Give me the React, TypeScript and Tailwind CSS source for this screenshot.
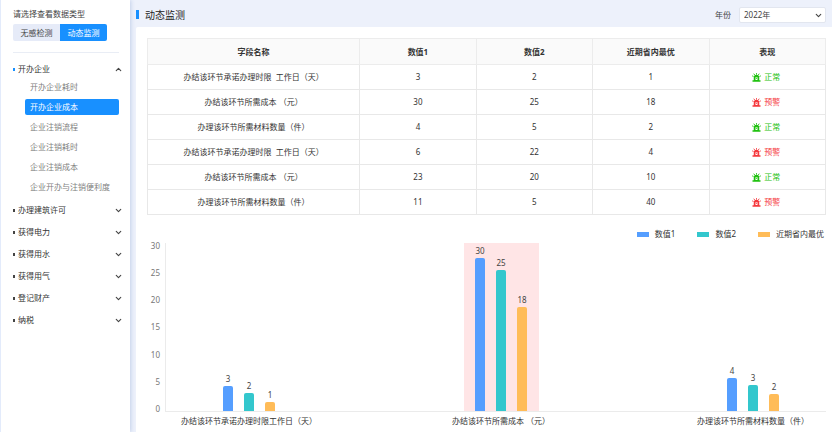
import { ChevronDown, ChevronUp } from "lucide-react";
import clsx from "clsx";

const subItems = [
  "开办企业耗时",
  "开办企业成本",
  "企业注销流程",
  "企业注销耗时",
  "企业注销成本",
  "企业开办与注销便利度",
];

const closedGroups = ["办理建筑许可", "获得电力", "获得用水", "获得用气", "登记财产", "纳税"];

const rows = [
  { name: "办结该环节承诺办理时限  工作日（天）", values: [3, 2, 1], ok: true },
  { name: "办结该环节所需成本 （元）", values: [30, 25, 18], ok: false },
  { name: "办理该环节所需材料数量（件）", values: [4, 5, 2], ok: true },
  { name: "办结该环节承诺办理时限  工作日（天）", values: [6, 22, 4], ok: false },
  { name: "办结该环节所需成本 （元）", values: [23, 20, 10], ok: true },
  { name: "办理该环节所需材料数量（件）", values: [11, 5, 40], ok: false },
];

const series = [
  { name: "数值1", color: "bg-[#559eff]" },
  { name: "数值2", color: "bg-[#33c7cd]" },
  { name: "近期省内最优", color: "bg-[#ffbc58]" },
];

// height is the bar's share of the plot, in percent
const chart = [
  {
    label: "办结该环节承诺办理时限工作日（天）",
    active: false,
    bars: [
      { value: 3, height: 15 },
      { value: 2, height: 11 },
      { value: 1, height: 5.5 },
    ],
  },
  {
    label: "办结该环节所需成本 （元）",
    active: true,
    bars: [
      { value: 30, height: 91 },
      { value: 25, height: 84 },
      { value: 18, height: 62 },
    ],
  },
  {
    label: "办理该环节所需材料数量（件）",
    active: false,
    bars: [
      { value: 4, height: 19.5 },
      { value: 3, height: 15.5 },
      { value: 2, height: 10 },
    ],
  },
];

const ticks = [30, 25, 20, 15, 10, 5, 0];

function SirenIcon() {
  return (
    <svg viewBox="0 0 18 18" className="h-[9px] w-[9px] shrink-0" aria-hidden>
      <path
        fill="currentColor"
        fillRule="evenodd"
        d="M3.5 14.5V9a5.5 5.5 0 0 1 11 0v5.5H17v3H1v-3h2.5Zm3.5-6v5.5h4V8.5H7Z"
      />
      <path fill="currentColor" d="M8.5 9.5H10V12H8.5z" />
      <path
        stroke="currentColor"
        strokeWidth="1.8"
        strokeLinecap="round"
        d="M9 1v1.5M4 2l1 1.4M14 2l-1 1.4M1 6l1.4.6M17 6l-1.4.6"
      />
    </svg>
  );
}

function Sidebar() {
  return (
    <aside className="z-10 w-[130px] shrink-0 border-l border-[#e3ebfb] bg-white pt-2 pr-[11px] pl-3 shadow-[1px_0_4px_#c3d0ea]">
      <p className="leading-3 text-[#444]">请选择查看数据类型</p>
      <div className="mt-1 flex w-[94px] overflow-hidden rounded-xs">
        <button type="button" className="h-[17px] flex-1 bg-[#e6ebf8] text-[#444]">
          无感检测
        </button>
        <button type="button" className="h-[17px] flex-1 bg-[#1890ff] text-white">
          动态监测
        </button>
      </div>
      <hr className="mt-[11px] border-[#e9edf5]" />

      <nav className="mt-2">
        <button type="button" className="flex h-4 w-full items-center text-left text-[#333]">
          <span className="mr-[3px] h-[3px] w-[2px] bg-[#1890ff]" />
          开办企业
          <ChevronUp strokeWidth={3} className="-mr-1 ml-auto h-[9px] w-[9px] text-[#444]" />
        </button>
        <ul className="mt-[2px] flex flex-col gap-1 pl-3">
          {subItems.map((item, i) => (
            <li key={item}>
              <a
                href="#"
                className={clsx(
                  "block h-4 rounded-xs pl-[5px] leading-4 whitespace-nowrap",
                  i === 1 ? "bg-[#1890ff] text-white" : "text-[#808080]",
                )}
              >
                {item}
              </a>
            </li>
          ))}
        </ul>
        <div className="mt-[7px] flex flex-col gap-[6px]">
          {closedGroups.map((group) => (
            <button
              key={group}
              type="button"
              className="flex h-4 w-full items-center text-left text-[#333]"
            >
              <span className="mr-[3px] h-[3px] w-[2px] bg-[#444]" />
              {group}
              <ChevronDown strokeWidth={3} className="-mr-1 ml-auto h-[9px] w-[9px] text-[#444]" />
            </button>
          ))}
        </div>
      </nav>
    </aside>
  );
}

function DataTable() {
  return (
    <table className="w-full table-fixed border-collapse border border-[#e6e6e6] text-center text-[#333]">
      <thead>
        <tr className="h-[26px] bg-[#fafafa]">
          <th className="w-[31.3%] border border-[#ececec]">字段名称</th>
          <th className="border border-[#ececec]">数值1</th>
          <th className="border border-[#ececec]">数值2</th>
          <th className="border border-[#ececec]">近期省内最优</th>
          <th className="border border-[#ececec]">表现</th>
        </tr>
      </thead>
      <tbody>
        {rows.map((row, i) => (
          <tr key={i} className="h-[25px]">
            <td className="border border-[#e8e8e8] whitespace-pre">{row.name}</td>
            {row.values.map((value, j) => (
              <td key={j} className="border border-[#e8e8e8]">
                {value}
              </td>
            ))}
            <td className="border border-[#e8e8e8]">
              <span
                className={clsx(
                  "flex items-center justify-center gap-[3px] pr-[2px]",
                  row.ok ? "text-[#1fc10f]" : "text-[#f5393d]",
                )}
              >
                <SirenIcon />
                {row.ok ? "正常" : "预警"}
              </span>
            </td>
          </tr>
        ))}
      </tbody>
    </table>
  );
}

function BarChart() {
  return (
    <section>
      <ul className="mt-[13px] flex justify-end gap-[22px] pr-[2px] text-[#333]">
        {series.map((s) => (
          <li key={s.name} className="flex items-center gap-[6px] leading-3">
            <span className={clsx("h-[5px] w-3", s.color)} />
            {s.name}
          </li>
        ))}
      </ul>
      <div className="flex items-start">
        <div className="flex h-[174px] w-[13px] flex-col justify-between text-right leading-[11px] text-[#777]">
          {ticks.map((tick) => (
            <span key={tick}>{tick}</span>
          ))}
        </div>
        <div className="mt-[3px] ml-[5px] flex-1">
          <div className="flex h-[169px] justify-between border-b border-l border-[#ebebeb] pr-1 pl-[14px]">
            {chart.map((group) => (
              <div key={group.label} className="flex w-[138px] justify-center">
                <div
                  className={clsx(
                    "flex w-[75px] items-end justify-center gap-[11px]",
                    group.active && "bg-[#ffe5e6]",
                  )}
                >
                  {group.bars.map((bar, i) => (
                    <div key={i} className="flex h-full w-[10px] flex-col items-center justify-end">
                      <span className="leading-3 text-[#444]">{bar.value}</span>
                      <span
                        className={clsx("mt-px w-full shrink-0 rounded-t-xs", series[i].color)}
                        style={{ height: `${bar.height}%` }}
                      />
                    </div>
                  ))}
                </div>
              </div>
            ))}
          </div>
          <div className="mt-[3px] flex justify-between pr-1 pl-[15px]">
            {chart.map((group) => (
              <span
                key={group.label}
                className="w-[138px] text-center leading-3 whitespace-nowrap text-[#333]"
              >
                {group.label}
              </span>
            ))}
          </div>
        </div>
      </div>
    </section>
  );
}

export default function App() {
  return (
    <div className="flex min-h-screen bg-[#edf1fb] font-['Noto_Sans','Noto_Sans_CJK_SC',sans-serif] text-[8px]">
      <Sidebar />
      <main className="ml-[6px] flex min-w-0 flex-1 flex-col">
        <header className="flex h-[27px] items-center pt-[2px] pr-[6px]">
          <span className="h-[9px] w-[3px] bg-[#1890ff]" />
          <h1 className="ml-[6px] text-[10px] leading-3 text-[#222]">动态监测</h1>
          <label htmlFor="year" className="mr-2 ml-auto text-[#444]">
            年份
          </label>
          <div className="relative w-[87px]">
            <select
              id="year"
              className="block h-4 w-full appearance-none rounded-xs border border-[#e2e6ef] bg-white pl-1 text-[#444]"
            >
              <option>2022年</option>
            </select>
            <ChevronDown
              strokeWidth={3}
              className="pointer-events-none absolute top-1 right-[3px] h-[9px] w-[9px] text-[#444]"
            />
          </div>
        </header>
        <div className="flex-1 rounded-tl-xs bg-white pt-[11px] pr-[6px] pl-[11px]">
          <DataTable />
          <BarChart />
        </div>
      </main>
    </div>
  );
}
